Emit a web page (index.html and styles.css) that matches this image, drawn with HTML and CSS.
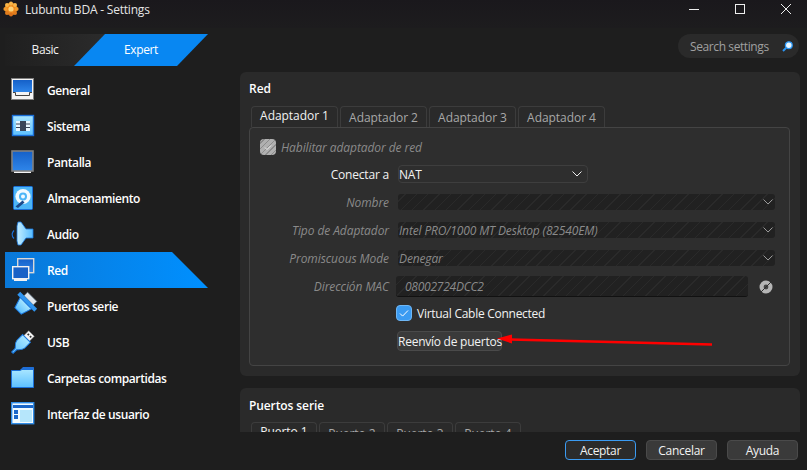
FILE: index.html
```html
<!DOCTYPE html>
<html lang="es">
<head>
    <meta charset="UTF-8">
    <meta name="viewport" content="width=device-width, initial-scale=1.0">
    <title>Lubuntu BDA - Settings</title>
    <link rel="stylesheet" href="styles.css">
</head>
<body>

<div class="window">
    <div class="titlebar">
        <svg class="app-icon" width="16" height="16" viewBox="0 0 16 16">
            <defs>
                <linearGradient id="screen" x1="0" y1="0" x2="0" y2="1"><stop offset="0" stop-color="#1560c8"/><stop offset="1" stop-color="#2f86ea"/></linearGradient>
                <linearGradient id="sky" x1="0" y1="0" x2="0" y2="1"><stop offset="0" stop-color="#a9e6ff"/><stop offset="1" stop-color="#5cc0ff"/></linearGradient>
                <linearGradient id="cone" x1="0" y1="0" x2="1" y2="0"><stop offset="0" stop-color="#c4eeff"/><stop offset="1" stop-color="#55bbff"/></linearGradient>
            </defs>
            <circle cx="8" cy="8" r="6.2" fill="#f08a1c"/>
            <circle cx="8" cy="2.4" r="2" fill="#f7b548"/>
            <circle cx="8" cy="13.6" r="2" fill="#d9701a"/>
            <circle cx="2.4" cy="8" r="2" fill="#f09a2c"/>
            <circle cx="13.6" cy="8" r="2" fill="#f09a2c"/>
            <circle cx="4" cy="4" r="2" fill="#f7b548"/>
            <circle cx="12" cy="4" r="2" fill="#f7b548"/>
            <circle cx="4" cy="12" r="2" fill="#e07c1e"/>
            <circle cx="12" cy="12" r="2" fill="#e07c1e"/>
            <circle cx="8" cy="8" r="2.6" fill="#fbd27a"/>
        </svg>
        <span class="title-text">Lubuntu BDA - Settings</span>
        <div class="win-buttons">
            <svg width="12" height="12" viewBox="0 0 12 12"><path d="M1 6.5h10" stroke="#eee" fill="none"/></svg>
            <svg width="12" height="12" viewBox="0 0 12 12"><rect x="1.5" y="1.5" width="9" height="9" stroke="#eee" fill="none"/></svg>
            <svg width="12" height="12" viewBox="0 0 12 12"><path d="M1 1l10 10M11 1L1 11" stroke="#eee" fill="none"/></svg>
        </div>
    </div>

    <div class="main">
        <div class="sidebar">
            <div class="mode-switch">
                <div class="mode mode-basic">Basic</div>
                <div class="mode mode-expert">Expert</div>
            </div>
            <ul class="nav">
                <li class="nav-item">
                    <svg width="24" height="24" viewBox="0 0 24 24"><rect x="0.5" y="0.5" width="22" height="21" fill="#f4f4f4" stroke="#808080"/><rect x="2" y="2" width="19" height="12" fill="url(#screen)"/><path d="M2 14.5h2.5v3h14v-3H21" fill="none" stroke="#444"/></svg>
                    General
                </li>
                <li class="nav-item">
                    <svg width="24" height="24" viewBox="0 0 24 24"><rect x="1.5" y="1.5" width="21" height="20" fill="url(#sky)" stroke="#1a6fd8" stroke-width="1.4"/><rect x="5" y="7" width="14" height="10" fill="#e8f7ff"/><rect x="9" y="7" width="6" height="10" fill="#3a4659"/><path d="M5 10h4M5 13.5h4M15 10h4M15 13.5h4" stroke="#3a4659"/></svg>
                    Sistema
                </li>
                <li class="nav-item">
                    <svg width="24" height="24" viewBox="0 0 24 24"><rect x="3" y="20" width="17" height="3" fill="#f4f4f4"/><rect x="1" y="1" width="21" height="20" fill="url(#screen)" stroke="#808080" stroke-width="1.6"/></svg>
                    Pantalla
                </li>
                <li class="nav-item">
                    <svg width="24" height="24" viewBox="0 0 24 24"><rect x="2.5" y="0.5" width="19" height="23" rx="1" fill="#4db6f7" stroke="#1a6fd8"/><circle cx="12" cy="10.5" r="7.6" fill="#f2faff"/><circle cx="12" cy="10.5" r="4" fill="#4db6f7"/><circle cx="12" cy="10.5" r="2" fill="#f2faff"/><path d="M4.5 20.5l7-6 2 2-6.5 5.5z" fill="#1b4a8c"/></svg>
                    Almacenamiento
                </li>
                <li class="nav-item">
                    <svg width="24" height="24" viewBox="0 0 24 24"><path d="M6 4l1-4h3l5 7h7v9h-7l-5 7H7l-1-4z" fill="url(#cone)" stroke="#1a78e0" stroke-width="0.8"/><path d="M3 8.5c-2.4 2.5-2.4 5.500 0 8" fill="none" stroke="#1a6fd8" stroke-width="1.2"/></svg>
                    Audio
                </li>
                <li class="nav-item active">
                    <svg width="24" height="24" viewBox="0 0 24 24"><rect x="6.700" y="0.700" width="16" height="14" fill="url(#screen)" stroke="#d8d8d8" stroke-width="1.400"/><rect x="1.700" y="8.700" width="16" height="12" fill="#1a62c6" stroke="#f2f2f2" stroke-width="1.400"/><rect x="3" y="21" width="13" height="2" fill="#f2f2f2"/></svg>
                    Red
                </li>
                <li class="nav-item">
                    <svg width="24" height="24" viewBox="0 0 24 24"><g transform="rotate(45 12 12)"><rect x="5.500" y="-1" width="13" height="5" fill="#dfe6ec" stroke="#6f8496" stroke-width="0.7"/><rect x="0" y="4" width="24" height="4" fill="#2f95f0"/><path d="M4 8h16l-3.500 11h-9z" fill="url(#sky)" stroke="#1a78e0"/></g></svg>
                    Puertos serie
                </li>
                <li class="nav-item">
                    <svg width="24" height="24" viewBox="0 0 24 24"><g transform="rotate(45 12 12)"><rect x="8" y="0" width="8" height="7" fill="#f4f4f4" stroke="#777" stroke-width="0.5"/><rect x="9.500" y="2" width="1.800" height="1.800" fill="#333"/><rect x="12.700" y="2" width="1.800" height="1.800" fill="#333"/><path d="M6.500 7h11v8c0 3-3 5-4.500 7v5h-2v-5c-1.500-2-4.500-4-4.500-7z" fill="url(#sky)" stroke="#1a78e0"/></g></svg>
                    USB
                </li>
                <li class="nav-item">
                    <svg width="24" height="24" viewBox="0 0 24 24"><path d="M9 4l3-3h10.500a.5.500 0 0 1 .5.500V6H9z" fill="#1f6ed6"/><path d="M0.500 4.500H9l2-1h11.500v18H0.500z" fill="url(#sky)" stroke="#1a6fd8"/></svg>
                    Carpetas compartidas
                </li>
                <li class="nav-item">
                    <svg width="24" height="24" viewBox="0 0 24 24"><rect x="0.700" y="0.700" width="22" height="21" fill="#f2fbff" stroke="#2f8ce8" stroke-width="1.400"/><rect x="2" y="3" width="20" height="3" fill="#1b66c8"/><rect x="3" y="8" width="4" height="4" fill="#1b66c8"/><rect x="3" y="13" width="4" height="4" fill="#1b66c8"/><rect x="9" y="8" width="12" height="12" fill="#b6e6fb"/></svg>
                    Interfaz de usuario
                </li>
            </ul>
        </div>

        <div class="content">
            <div class="search-row">
                <div class="search">
                    <span>Search settings</span>
                    <svg width="11" height="11" viewBox="0 0 11 11"><circle cx="6.800" cy="4.200" r="3.400" fill="#e8f6ff" stroke="#2b95f2" stroke-width="1.300"/><path d="M4 7L1 10" stroke="#2b95f2" stroke-width="2"/></svg>
                </div>
            </div>

            <div class="panel">
                <div class="panel-title">Red</div>
                <div class="tabs">
                    <div class="tab tab-on">Adaptador 1</div>
                    <div class="tab">Adaptador 2</div>
                    <div class="tab">Adaptador 3</div>
                    <div class="tab">Adaptador 4</div>
                </div>
                <div class="pane">
                    <div class="enable-row">
                        <span class="check check-off">
                            <svg width="16" height="16" viewBox="0 0 16 16"><path d="M5 8.500l2 2 4-4" stroke="#eee" fill="none"/></svg>
                        </span>
                        <span class="dim">Habilitar adaptador de red</span>
                    </div>
                    <div class="row row-connect">
                        <label class="row-label">Conectar a</label>
                        <div class="combo">NAT
                            <svg width="10" height="6" viewBox="0 0 10 6"><path d="M0.500 0.500L5 5l4.500-4.500" stroke="#eee" fill="none"/></svg>
                        </div>
                    </div>
                    <div class="row row-name">
                        <label class="row-label dim">Nombre</label>
                        <div class="hatched"><span></span>
                            <svg width="10" height="6" viewBox="0 0 10 6"><path d="M0.500 0.500L5 5l4.500-4.500" stroke="#999" fill="none"/></svg>
                        </div>
                    </div>
                    <div class="row row-type">
                        <label class="row-label dim">Tipo de Adaptador</label>
                        <div class="hatched"><span>Intel PRO/1000 MT Desktop (82540EM)</span>
                            <svg width="10" height="6" viewBox="0 0 10 6"><path d="M0.500 0.500L5 5l4.500-4.500" stroke="#999" fill="none"/></svg>
                        </div>
                    </div>
                    <div class="row row-type">
                        <label class="row-label dim">Promiscuous Mode</label>
                        <div class="hatched"><span>Denegar</span>
                            <svg width="10" height="6" viewBox="0 0 10 6"><path d="M0.500 0.500L5 5l4.500-4.500" stroke="#999" fill="none"/></svg>
                        </div>
                    </div>
                    <div class="row row-mac">
                        <label class="row-label dim">Dirección MAC</label>
                        <div class="mac-field"><span>08002724DCC2</span></div>
                        <svg class="mac-icon" width="14" height="14" viewBox="0 0 14 14"><circle cx="7" cy="7" r="6.500" fill="#b5b5b5"/><circle cx="7" cy="7" r="2.400" fill="#444"/><path d="M1 13L13 1" stroke="#2e2e2e"/></svg>
                    </div>
                    <div class="cable-row">
                        <span class="check check-on">
                            <svg width="16" height="16" viewBox="0 0 16 16"><path d="M4 8.500l2.600 2.600L12 5.500" stroke="#fff" fill="none"/></svg>
                        </span>
                        <span>Virtual Cable Connected</span>
                    </div>
                    <button class="btn btn-ports">Reenvío de puertos</button>
                </div>
            </div>

            <div class="panel panel-ports">
                <div class="panel-title">Puertos serie</div>
                <div class="tabs">
                    <div class="tab tab-port tab-on">Puerto 1</div>
                    <div class="tab tab-port">Puerto 2</div>
                    <div class="tab tab-port">Puerto 3</div>
                    <div class="tab tab-port">Puerto 4</div>
                </div>
            </div>
        </div>
    </div>

    <div class="footer">
        <button class="btn btn-foot btn-default">Aceptar</button>
        <button class="btn btn-foot">Cancelar</button>
        <button class="btn btn-foot">Ayuda</button>
    </div>

    <!-- flecha roja encima de la captura -->
    <svg class="arrow" width="220" height="16" viewBox="0 0 220 16">
        <path d="M14 6.500L216 11.500" stroke="#f00" stroke-width="2.600" fill="none"/>
        <path d="M1 5.500L16 1.500v9z" fill="#f00"/>
    </svg>
</div>

</body>
</html>
```

FILE: styles.css
```css
* {
    box-sizing: border-box;
}
body {
    margin: 0;
    background-color: #1e1e1e;
    color: #f2f2f2;
    font-family: "Open Sans", "Noto Sans", sans-serif;
    font-size: 12px;
}
.window {
    position: relative;
    width: 807px;
    height: 470px;
    overflow: hidden;
    display: flex;
    flex-direction: column;
}
.titlebar {
    height: 28px;
    flex: none;
    display: flex;
    align-items: flex-start;
    background: linear-gradient(#1a181c, #1d1c1e);
}
.app-icon {
    margin: 1px 0 0 3px;
}
.title-text {
    margin: 2px 0 0 6px;
    color: #e6e6e6;
    line-height: 16px;
    letter-spacing: -0.2px;
}
.win-buttons {
    margin-left: auto;
    margin-right: 15px;
    margin-top: 3px;
    display: flex;
    gap: 34px;
}
.main {
    height: 404px;
    flex: none;
    display: flex;
    overflow: hidden;
}
.sidebar {
    width: 240px;
    flex: none;
    padding: 6px 0 0 5px;
}
.mode-switch {
    display: flex;
    width: 203px;
    height: 32px;
    margin-bottom: 6px;
    line-height: 32px;
    text-align: center;
    letter-spacing: -0.4px;
}
.mode-basic {
    width: 100px;
    padding-right: 20px;
    background: linear-gradient(90deg, #1f1f1f, #2b2b2b);
}
.mode-expert {
    width: 134px;
    margin-left: -31px;
    background: #0887f2;
    color: white;
    clip-path: polygon(31px 0, 100% 0, 103px 100%, 0 100%);
}
.nav {
    list-style: none;
    margin: 0;
    padding: 0;
    width: 203px;
}
.nav-item {
    height: 36px;
    display: flex;
    align-items: center;
    gap: 12px;
    padding-left: 6px;
    font-weight: 600;
    color: #fff;
    letter-spacing: -0.4px;
}
.nav-item svg {
    flex: none;
    overflow: visible;
}
.nav-item.active {
    background: linear-gradient(90deg, #0a78d8, #0090ff);
    clip-path: polygon(0 0, 167px 0, 100% 100%, 0 100%);
}
.content {
    width: 560px;
    flex: none;
}
.search-row {
    height: 44px;
    padding-top: 6px;
    display: flex;
    justify-content: flex-end;
}
.search {
    width: 121px;
    height: 24px;
    margin-right: 1px;
    padding: 0 6px 0 12px;
    border-radius: 12px;
    background-color: #2a2a2a;
    color: #a0a0a0;
    letter-spacing: -0.4px;
    display: flex;
    align-items: center;
    justify-content: space-between;
}
.panel {
    background-color: #2a2a2a;
    border-radius: 6px;
    height: 304px;
    padding: 9px;
}
.panel-ports {
    margin-top: 12px;
    padding-top: 10px;
}
.panel-ports .tabs {
    margin-top: 8px;
}
.panel-title {
    height: 16px;
    line-height: 16px;
    font-weight: 600;
    color: #fff;
}
.panel-ports .panel-title {
    letter-spacing: -0.1px;
}
.tabs {
    display: flex;
    gap: 2px;
    height: 21px;
    margin: 9px 0 0 2px;
}
.tab {
    width: 87px;
    border: 1px solid #3c3c3c;
    border-bottom: none;
    border-radius: 4px 4px 0 0;
    background-color: #2a2a2a;
    color: #a8a8a8;
    text-align: center;
    line-height: 20px;
    padding-top: 1px;
    letter-spacing: -0.05px;
}
.tab-on {
    color: #f2f2f2;
    line-height: 18px;
    padding-top: 0;
}
.tab-port {
    width: 66px;
}
.pane {
    height: 239px;
    width: 541px;
    border: 1px solid #444;
    border-radius: 4px;
    background-color: #2e2e2e;
    padding: 11px 0 0 10px;
}
.enable-row {
    display: flex;
    align-items: center;
    gap: 5px;
    height: 16px;
    font-style: italic;
}
.dim {
    color: #8a8a8a;
    font-style: italic;
    letter-spacing: -0.08px;
}
.check {
    width: 16px;
    height: 16px;
    border-radius: 4px;
    display: block;
    flex: none;
}
.check-off {
    background: repeating-linear-gradient(-45deg, #b0b0b0 0 3px, #8c8c8c 3px 4px);
}
.check-on {
    background-color: #3b9bf2;
    border: 1px solid #6fb7f5;
}
.check svg {
    display: block;
    margin: -1px;
}
.check-off svg {
    margin: 0;
}
.row {
    display: flex;
    align-items: center;
}
.row-label {
    width: 129px;
    text-align: right;
    margin-right: 9px;
    flex: none;
}
.row-connect {
    margin-top: 10px;
    height: 18px;
    letter-spacing: -0.2px;
}
.row-name {
    margin-top: 11px;
    height: 16px;
}
.row-type {
    margin-top: 12px;
    height: 16px;
}
.row-mac {
    margin-top: 10px;
    height: 21px;
}
.combo {
    width: 190px;
    height: 18px;
    padding: 0 5px 0 0;
    border: 1px solid #3e3e3e;
    border-radius: 4px;
    display: flex;
    align-items: center;
    justify-content: space-between;
}
.hatched,
.mac-field {
    background-color: #212121;
    background-image: repeating-linear-gradient(-45deg, #2a2a2a 0 1px, transparent 1px 8px);
    border-radius: 3px;
    color: #8a8a8a;
    font-style: italic;
}
.hatched {
    width: 377px;
    height: 16px;
    padding: 0 2px 0 1px;
    letter-spacing: -0.14px;
    display: flex;
    align-items: center;
    justify-content: space-between;
}
.mac-field {
    width: 352px;
    height: 21px;
    margin-left: -2px;
    padding-left: 9px;
    line-height: 21px;
    letter-spacing: -0.25px;
    border-bottom: 1px solid #111;
}
.mac-icon {
    margin-left: 11px;
}
.cable-row {
    display: flex;
    align-items: center;
    gap: 5px;
    height: 16px;
    margin: 8px 0 0 136px;
    letter-spacing: -0.27px;
}
.btn {
    font-family: inherit;
    font-size: 12px;
    color: #f2f2f2;
    background-color: #3a3a3a;
    border: 1px solid #4a4a4a;
    border-radius: 4px;
    padding: 0;
    white-space: nowrap;
}
.btn-ports {
    display: block;
    width: 105px;
    height: 20px;
    margin: 10px 0 0 137px;
    letter-spacing: -0.25px;
}
.footer {
    height: 38px;
    flex: none;
    display: flex;
    justify-content: flex-end;
    align-items: flex-start;
    gap: 10px;
    padding: 8px 9px 0 0;
    background-color: #1e1e1e;
}
.btn-foot {
    width: 71px;
    height: 20px;
    letter-spacing: -0.3px;
}
.btn-default {
    background-color: #2b2b2b;
    border-color: #3b9bf2;
}
.arrow {
    position: absolute;
    left: 496px;
    top: 333px;
}
```
